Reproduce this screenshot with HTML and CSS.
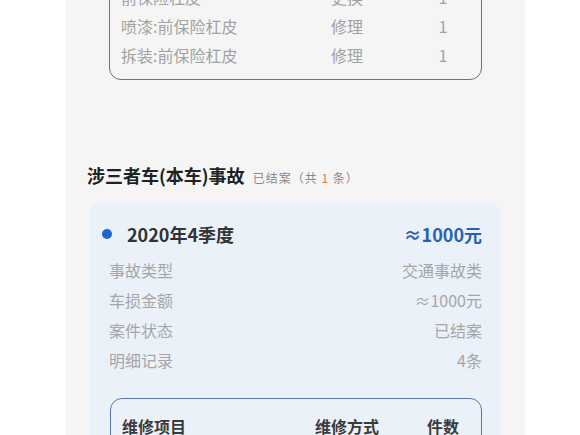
FILE: index.html
```html
<!DOCTYPE html>
<html lang="zh-CN">
<head>
    <meta charset="UTF-8">
    <meta name="viewport" content="width=device-width, initial-scale=1.0">
    <title>出险记录</title>
    <link rel="stylesheet" href="styles.css">
</head>
<body>
    <div class="panel">
        <!-- previous record: only the bottom of its repair table is on screen -->
        <div class="repair-box repair-box-prev">
            <div class="repair-row repair-head">
                <span>维修项目</span><span class="c">维修方式</span><span class="c">件数</span>
            </div>
            <div class="repair-row">
                <span>前保险杠皮</span><span class="c">更换</span><span class="c">1</span>
            </div>
            <div class="repair-row">
                <span>喷漆:前保险杠皮</span><span class="c">修理</span><span class="c">1</span>
            </div>
            <div class="repair-row">
                <span>拆装:前保险杠皮</span><span class="c">修理</span><span class="c">1</span>
            </div>
        </div>

        <h3 class="section-title">涉三者车(本车)事故 <small>已结案（共 <em>1</em> 条）</small></h3>

        <div class="claim-card">
            <div class="claim-head">
                <span class="dot"></span>
                <span class="period">2020年4季度</span>
                <span class="amount">≈1000元</span>
            </div>
            <div class="claim-info">
                <div class="info-row"><span>事故类型</span><span>交通事故类</span></div>
                <div class="info-row"><span>车损金额</span><span>≈1000元</span></div>
                <div class="info-row"><span>案件状态</span><span>已结案</span></div>
                <div class="info-row"><span>明细记录</span><span>4条</span></div>
            </div>
            <div class="repair-box">
                <div class="repair-row repair-head">
                    <span>维修项目</span><span class="c">维修方式</span><span class="c">件数</span>
                </div>
                <div class="repair-row">
                    <span>更换:前保险杠皮</span><span class="c">更换</span><span class="c">1</span>
                </div>
            </div>
        </div>

        <!-- watermark -->
        <span class="mark" style="left:120px;top:-6px">车信盟</span>
        <span class="mark" style="left:60px;top:150px">车信盟</span>
        <span class="mark" style="left:230px;top:186px">车信盟</span>
        <span class="mark" style="left:378px;top:150px">车信盟</span>
        <span class="mark" style="left:130px;top:320px">车信盟</span>
    </div>
</body>
</html>
```

FILE: styles.css
```css
body {
    margin: 0;
    background: #fff;
    font-family: "Noto Sans CJK SC", "Noto Sans", sans-serif;
    overflow: hidden;
}
.panel {
    position: relative;
    margin-left: 66px;
    width: 459px;
    height: 435px;
    padding: 0 25px 0 24px;
    box-sizing: border-box;
    background: #f5f5f5;
    overflow: hidden;
}
.repair-box {
    border: 1px solid #56779f;
    border-radius: 12px;
    padding: 12px 10px 10px 11px;
    margin-left: 8px;
}
.repair-box-prev {
    margin: -60px 18px 0 19px;
}
.repair-row {
    display: grid;
    grid-template-columns: 1fr 80px 56px;
    column-gap: 28px;
    height: 29px;
    align-items: center;
    font-size: 16px;
    color: #a2a2a2;
}
.repair-row .c {
    text-align: center;
}
.repair-head {
    color: #3a3a3a;
    font-weight: bold;
}
.section-title {
    margin: 82px 0 15px -3px;
    height: 26px;
    line-height: 26px;
    font-size: 18px;
    color: #222;
}
.section-title small {
    font-size: 12px;
    font-weight: normal;
    color: #8a8a8a;
    margin-left: 4px;
    letter-spacing: 1px;
}
.section-title em {
    font-style: normal;
    color: #e0784f;
}
.claim-card {
    background: #ebf1f9;
    border-radius: 10px;
    padding: 16px 18px 20px 12px;
}
.claim-head {
    display: flex;
    align-items: center;
    height: 30px;
}
.dot {
    width: 10px;
    height: 10px;
    border-radius: 50%;
    background: #1b65cc;
    margin-right: 15px;
    margin-top: -1px;
}
.period {
    flex: 1;
    font-size: 18px;
    font-weight: bold;
    color: #333;
}
.amount {
    font-size: 18px;
    font-weight: bold;
    color: #2860b4;
}
.claim-info {
    padding: 6px 0 0 7px;
    margin-bottom: 23px;
}
.info-row {
    display: flex;
    justify-content: space-between;
    height: 30px;
    line-height: 30px;
    font-size: 16px;
    color: #a6a6a6;
}
.mark {
    position: absolute;
    font-size: 24px;
    font-weight: bold;
    color: rgba(0, 0, 0, 0.022);
    transform: rotate(-22deg);
    white-space: nowrap;
    pointer-events: none;
}
```
